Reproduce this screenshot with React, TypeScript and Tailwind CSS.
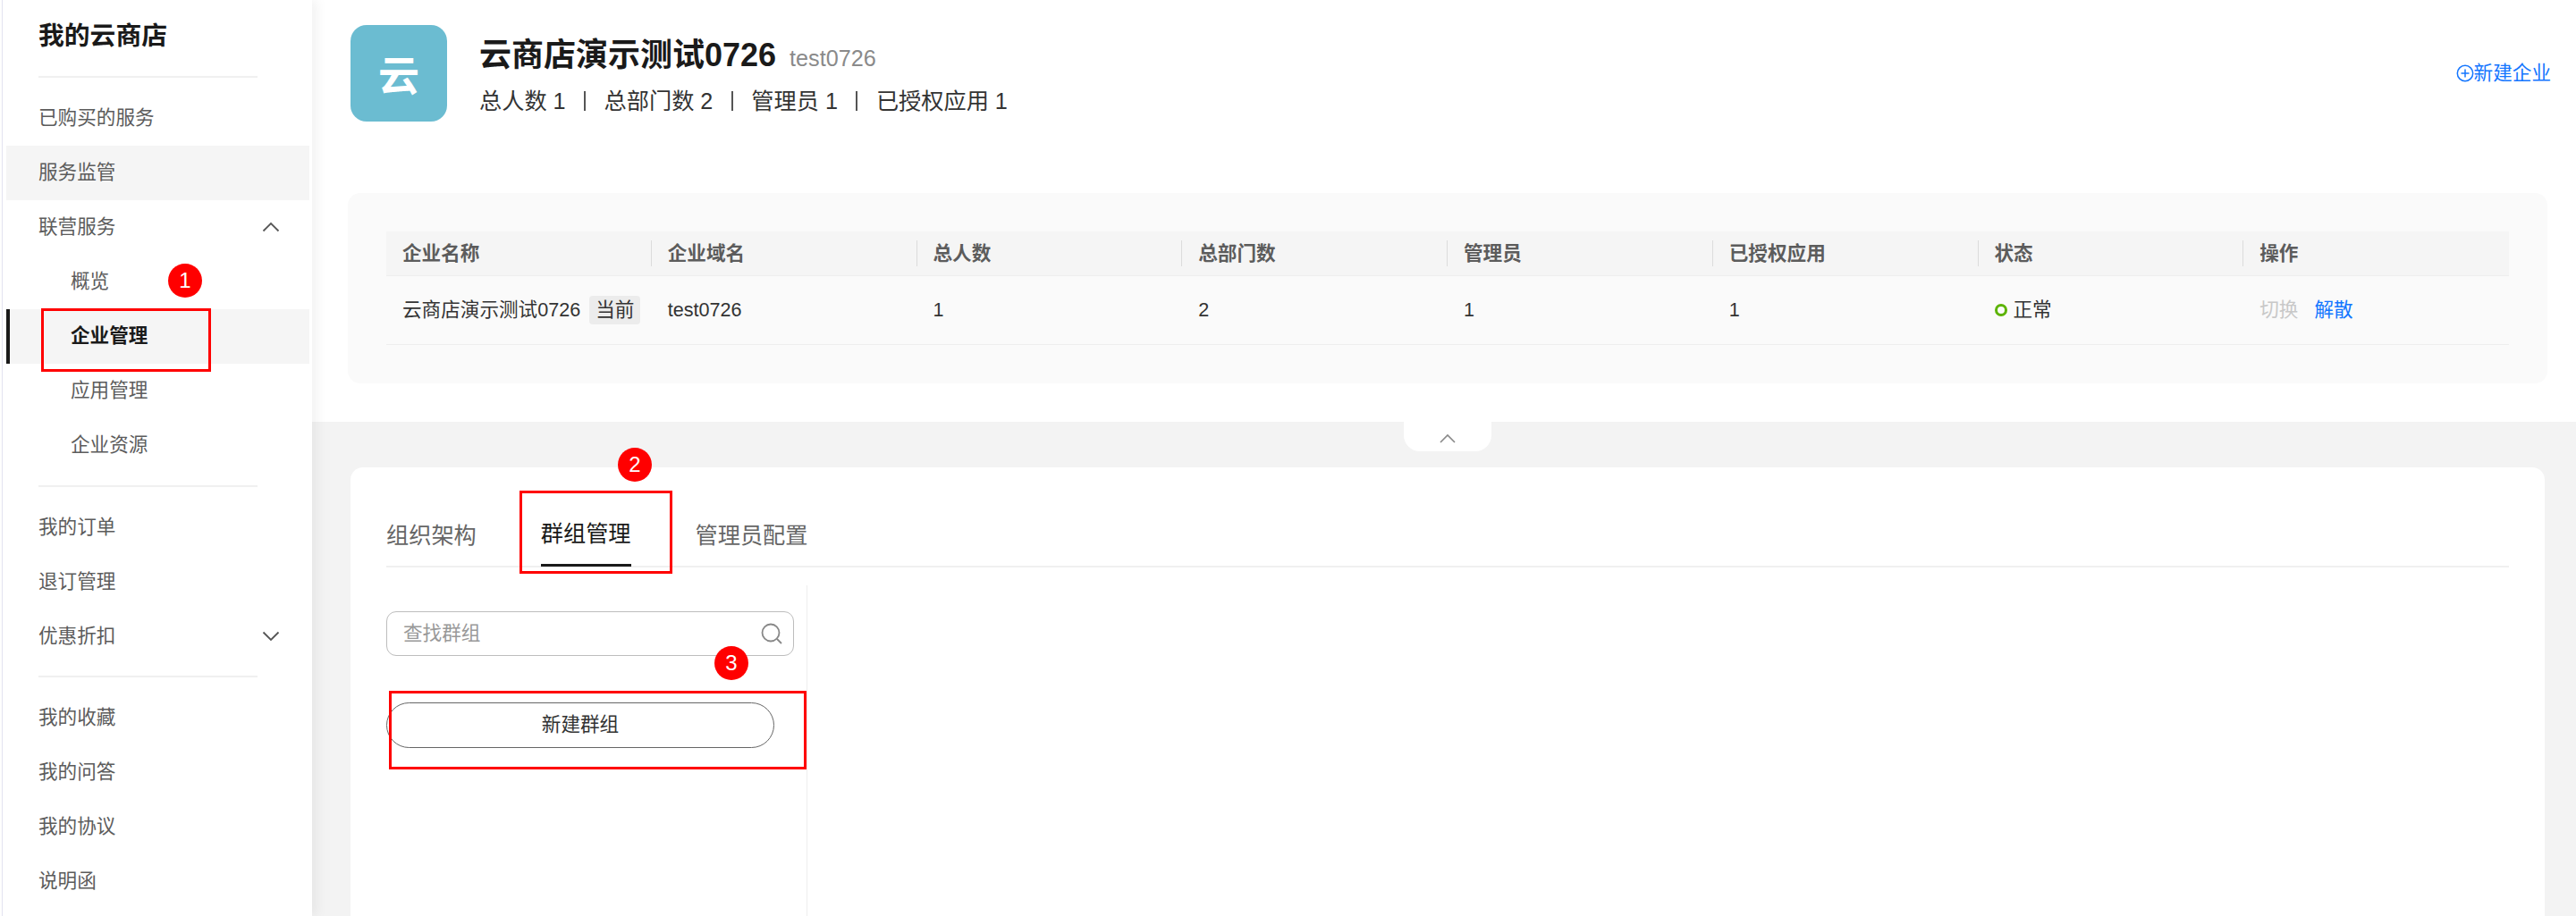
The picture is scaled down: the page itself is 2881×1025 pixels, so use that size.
import React from "react";

function Chevron({ up, className }: { up?: boolean; className?: string }) {
  return (
    <svg width="20" height="12" viewBox="0 0 20 12" fill="none" className={className}>
      <path d={up ? "M1.5 10.5L10 2L18.5 10.5" : "M1.5 1.5L10 10L18.5 1.5"} stroke="currentColor" strokeWidth="1.8" />
    </svg>
  );
}

function NavItem({ label, sub, active, hover, chevron }: { label: string; sub?: boolean; active?: boolean; hover?: boolean; chevron?: "up" | "down" }) {
  return (
    <div
      className={
        "h-[61px] flex items-center justify-between text-[21.6px] leading-[58px] pb-[1px] " +
        (sub ? "pl-[72px] " : "pl-[36px] ") +
        (hover || active ? "bg-[#f5f5f5] " : "") +
        (active ? "font-bold text-[#1a1a1a] border-l-[4px] border-[#1a1a1a] !pl-[68px] " : "text-[#5c5c5c] ")
      }
    >
      <span>{label}</span>
      {chevron && <Chevron up={chevron === "up"} className="mr-[33px] text-[#555555]" />}
    </div>
  );
}

function Divider() {
  return <div className="ml-[40px] w-[245px] h-[2px] bg-[#f0f0f0]" />;
}

function Sidebar() {
  return (
    <aside className="relative z-10 w-[347px] ml-[2px] shrink-0 h-full bg-white border-l border-[#e3e3f0] shadow-[6px_0_12px_rgba(0,0,0,0.05)]">
      <div className="h-[85px] pl-[40px] pt-[19px] text-[28.8px] leading-[42px] font-bold text-[#1a1a1a]">我的云商店</div>
      <Divider />
      <div className="pl-[4px] pr-[3px] pt-[15px]">
        <NavItem label="已购买的服务" />
        <NavItem label="服务监管" hover />
        <NavItem label="联营服务" chevron="up" />
        <NavItem label="概览" sub />
        <NavItem label="企业管理" sub active />
        <NavItem label="应用管理" sub />
        <NavItem label="企业资源" sub />
      </div>
      <div className="mt-[14px]"><Divider /></div>
      <div className="pl-[4px] pr-[3px] pt-[15px]">
        <NavItem label="我的订单" />
        <NavItem label="退订管理" />
        <NavItem label="优惠折扣" chevron="down" />
      </div>
      <div className="mt-[13px]"><Divider /></div>
      <div className="pl-[4px] pr-[3px] pt-[15px]">
        <NavItem label="我的收藏" />
        <NavItem label="我的问答" />
        <NavItem label="我的协议" />
        <NavItem label="说明函" />
      </div>
    </aside>
  );
}

const columns = ["企业名称", "企业域名", "总人数", "总部门数", "管理员", "已授权应用", "状态", "操作"];

function HeaderBar() {
  const stats = ["总人数 1", "总部门数 2", "管理员 1", "已授权应用 1"];
  return (
    <div className="flex items-center h-[108px] pl-[43px] pr-[28px]">
      <div className="w-[108px] h-[108px] rounded-[18px] bg-[#6bbcd1] flex items-center justify-center text-white text-[46px] font-bold leading-none pt-[6px]">云</div>
      <div className="ml-[36px] flex-1 h-full">
        <div className="flex items-baseline pt-[12px] h-[66px]">
          <span className="text-[36px] leading-[44px] font-bold text-[#1a1a1a]">云商店演示测试0726</span>
          <span className="ml-[15px] text-[25.2px] text-[#8a8a8a]">test0726</span>
        </div>
        <div className="flex items-center gap-[20.5px] text-[25.2px] leading-[36px] text-[#333333] mt-[1px]">
          {stats.map((s, i) => (
            <React.Fragment key={s}>
              {i > 0 && <span className="w-[2px] h-[22px] bg-[#555555]" />}
              <span>{s}</span>
            </React.Fragment>
          ))}
        </div>
      </div>
      <div className="flex items-center text-[21.6px] text-[#1476ff]">
        <svg width="20" height="20" viewBox="0 0 20 20" fill="none" stroke="currentColor" strokeWidth="1.5">
          <circle cx="10" cy="10" r="8.7" />
          <path d="M10 5.5V14.5M5.5 10H14.5" />
        </svg>
        <span>新建企业</span>
      </div>
    </div>
  );
}

function Cell({ children }: { children: React.ReactNode }) {
  return <div className="pl-[18px] flex items-center">{children}</div>;
}

function CompanyTable() {
  return (
    <div className="ml-[40px] mt-[80px] w-[2460px] h-[213px] rounded-[14px] bg-[#fafafa] pt-[43px] pl-[43px]">
      <div className="w-[2374px]">
        <div className="grid grid-cols-8 h-[50px] bg-[#f5f5f5] border-b border-[#eeeeee] text-[21.6px] font-bold text-[#5c5c5c] items-center">
          {columns.map((c, i) => (
            <div key={c} className={"h-[29px] flex items-center pl-[18px] pt-[2px] " + (i < 7 ? "border-r border-[#dcdcdc]" : "")}>{c}</div>
          ))}
        </div>
        <div className="grid grid-cols-8 h-[77px] border-b border-[#eeeeee] text-[21.6px] text-[#333333]">
          <Cell>
            <span>云商店演示测试0726</span>
            <span className="ml-[10px] px-[7px] h-[32px] leading-[32px] rounded-[4px] bg-[#ececec]">当前</span>
          </Cell>
          <Cell>test0726</Cell>
          <Cell>1</Cell>
          <Cell>2</Cell>
          <Cell>1</Cell>
          <Cell>1</Cell>
          <Cell>
            <span className="w-[14px] h-[14px] rounded-full border-[3px] border-[#5cb300]" />
            <span className="ml-[7px]">正常</span>
          </Cell>
          <Cell>
            <span className="text-[#c8c8c8]">切换</span>
            <span className="ml-[18px] text-[#1476ff]">解散</span>
          </Cell>
        </div>
      </div>
    </div>
  );
}

function GroupCard() {
  return (
    <div className="ml-[43px] w-[2454px] flex-1 bg-white rounded-t-[14px] px-[40px]">
      <div className="h-[112px] flex items-end gap-[72px] border-b-2 border-[#f0f0f0] text-[25.2px] text-[#666666]">
        <div className="h-[36px] mb-[16px] leading-[36px]">组织架构</div>
        <div className="h-[55px] leading-[36px] text-[#1a1a1a] border-b-[3px] border-[#1a1a1a] -mb-[1px]">群组管理</div>
        <div className="h-[36px] mb-[16px] leading-[36px]">管理员配置</div>
      </div>
      <div className="mt-[20px] w-[471px] h-[400px] border-r border-[#eeeeee] pt-[29px]">
        <div className="w-[456px] h-[50px] rounded-[11px] border border-[#bdbdbd] flex items-center justify-between pl-[18px] pr-[11px] text-[21.6px] text-[#999999]">
          <span>查找群组</span>
          <svg width="26" height="26" viewBox="0 0 26 26" fill="none" stroke="#888888" strokeWidth="1.8">
            <circle cx="12" cy="12" r="9.5" />
            <path d="M19 19L24 24" />
          </svg>
        </div>
        <div className="mt-[52px] w-[434px] h-[51px] rounded-full border border-[#666666] flex items-center justify-center text-[21.6px] text-[#333333]">新建群组</div>
      </div>
    </div>
  );
}

function Callouts() {
  const boxes = ["left-[46px] top-[345px] w-[190px] h-[71px]", "left-[581px] top-[549px] w-[171px] h-[93px]", "left-[435px] top-[773px] w-[467px] h-[88px]"];
  const badges: [string, string][] = [
    ["1", "left-[188px] top-[295px]"],
    ["2", "left-[691px] top-[501px]"],
    ["3", "left-[799px] top-[723px]"],
  ];
  return (
    <>
      {boxes.map((b) => (
        <div key={b} className={"absolute z-20 border-[3px] border-[#ff0000] " + b} />
      ))}
      {badges.map(([n, pos]) => (
        <div key={n} className={"absolute z-20 w-[38px] h-[38px] rounded-full bg-[#ff0000] text-white text-[24px] flex items-center justify-center " + pos}>{n}</div>
      ))}
    </>
  );
}

export default function App() {
  return (
    <div className="relative flex w-[2881px] h-[1025px] overflow-hidden bg-white font-['Liberation_Sans','Noto_Sans_CJK_SC',sans-serif]">
      <Sidebar />
      <main className="flex-1 flex flex-col h-full min-w-0">
        <section className="h-[472px] shrink-0 pt-[28px] bg-white">
          <HeaderBar />
          <CompanyTable />
        </section>
        <section className="flex-1 flex flex-col bg-[#f3f3f3] min-h-0">
          <div className="h-[51px] shrink-0">
            <div className="ml-[1221px] w-[98px] h-[33px] bg-white rounded-b-[18px] flex items-center justify-center pt-[3px]">
              <svg width="18" height="11" viewBox="0 0 18 11" fill="none" stroke="#888888" strokeWidth="1.6">
                <path d="M1 10L9 2L17 10" />
              </svg>
            </div>
          </div>
          <GroupCard />
        </section>
      </main>
      <Callouts />
    </div>
  );
}
